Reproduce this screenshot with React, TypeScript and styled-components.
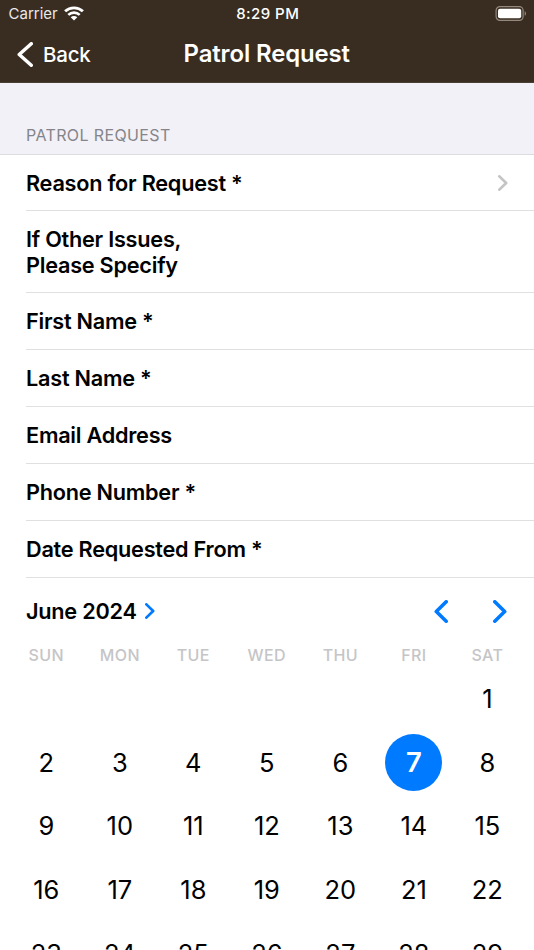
import React from 'react';
import styled, { createGlobalStyle } from 'styled-components';

const Global = createGlobalStyle`
  * { box-sizing: border-box; }
  html, body { margin: 0; overflow: hidden; background: #fff; }
  body { font-family: Inter, "Liberation Sans", sans-serif; color: #000; }
`;

const Screen = styled.div`
  width: 534px;
  height: 950px;
  overflow: hidden;
  background: #fff;
`;

const Header = styled.header`
  height: 83px;
  background: #392d21;
  border-bottom: 1px solid #4b4036;
  color: #fff;
`;

const StatusBar = styled.div`
  height: 27px;
  display: grid;
  grid-template-columns: 1fr auto 1fr;
  align-items: center;
  padding: 0 7px 0 8.5px;
  font-size: 15px;
`;

const Carrier = styled.div`
  display: flex;
  align-items: center;
  gap: 6px;
  color: #ebe9e7;
`;

const Clock = styled.time`
  font-weight: 500;
  letter-spacing: 0.45px;
`;

const BatteryIcon = styled.svg`
  justify-self: end;
`;

const NavBar = styled.div`
  height: 54px;
  display: grid;
  grid-template-columns: 1fr auto 1fr;
  align-items: center;
  padding: 0 17px 0 16.5px;
`;

const Back = styled.div`
  display: flex;
  align-items: center;
  gap: 10.5px;
  padding-top: 1px;
  font-size: 20.5px;
  font-weight: 540;
  letter-spacing: -0.2px;
`;

const Title = styled.h1`
  margin: 0;
  padding-bottom: 1px;
  font-size: 23.9px;
  font-weight: 570;
  letter-spacing: -0.1px;
`;

const SectionHeader = styled.h2`
  margin: 0;
  height: 72px;
  padding: 42px 26px 0;
  background: #f2f1f7;
  border-bottom: 1px solid #dcdce0;
  color: #858589;
  font-size: 16px;
  font-weight: 400;
  letter-spacing: 0.38px;
  line-height: 20px;
`;

const Row = styled.div<{ $height: number }>`
  height: ${p => p.$height}px;
  margin-left: 26px;
  padding-right: 26px;
  border-bottom: 1px solid #e0e0e2;
  display: flex;
  align-items: center;
  justify-content: space-between;
`;

const Label = styled.span`
  font-size: 21.7px;
  font-weight: 565;
  letter-spacing: -0.25px;
  line-height: 26px;
  white-space: pre-line;
`;

const MonthBar = styled.div`
  height: 67px;
  padding: 0 27px 0 26px;
  display: flex;
  align-items: center;
  justify-content: space-between;
`;

const Month = styled.div`
  display: flex;
  align-items: center;
  gap: 8px;
  padding-bottom: 1px;
`;

const Arrows = styled.div`
  display: flex;
  gap: 45px;
`;

const Grid = styled.div<{ $height: number }>`
  display: grid;
  grid-template-columns: repeat(7, 73.5px);
  height: ${p => p.$height}px;
  padding-left: 9.6px;
  align-items: center;
  justify-items: center;
`;

const Weekday = styled.span`
  padding-bottom: 2px;
  font-size: 16px;
  font-weight: 550;
  letter-spacing: 0.4px;
  color: #c5c5c7;
`;

const Day = styled.span<{ $selected: boolean }>`
  width: 57px;
  height: 57px;
  border-radius: 50%;
  display: grid;
  place-items: center;
  font-size: ${p => (p.$selected ? 27.5 : 25.5)}px;
  background: ${p => (p.$selected ? '#007aff' : 'transparent')};
  color: ${p => (p.$selected ? '#fff' : '#000')};
  font-weight: ${p => (p.$selected ? 600 : 400)};
`;

type ChevronProps = { dir: 'left' | 'right'; w: number; h: number; stroke: number; color: string };

function Chevron({ dir, w, h, stroke, color }: ChevronProps) {
  const inset = stroke / 2;
  const tip = dir === 'left' ? inset + 0.5 : w - inset - 0.5;
  const end = dir === 'left' ? w - inset : inset;
  return (
    <svg width={w} height={h} viewBox={`0 0 ${w} ${h}`} fill="none" stroke={color}
      strokeWidth={stroke} strokeLinecap="round" strokeLinejoin="round">
      <path d={`M${end} ${inset}L${tip} ${h / 2}L${end} ${h - inset}`} />
    </svg>
  );
}

function Wifi() {
  return (
    <svg width="20" height="15" viewBox="0 0 20 15" fill="none" stroke="#fff" strokeWidth="2.9">
      <path d="M1.1 5.3C6.1.7 13.9.7 18.9 5.3" />
      <path d="M4.3 8.9C7.5 5.9 12.5 5.9 15.7 8.9" strokeWidth="2.6" />
      <path d="M6.7 11.3C8.6 9.6 11.4 9.6 13.3 11.3L10 14.6Z" fill="#fff" stroke="none" />
    </svg>
  );
}

function Battery() {
  return (
    <BatteryIcon width="32" height="15" viewBox="0 0 32 15" fill="none">
      <rect x="1.1" y=".6" width="27" height="13.8" rx="3.8" stroke="#94897f" strokeWidth="1.2" />
      <rect x="3" y="2.7" width="23.2" height="9.6" rx="2" fill="#fff" />
      <path d="M29.7 5.2C31.4 5.8 31.4 9.2 29.7 9.8Z" fill="#94897f" />
    </BatteryIcon>
  );
}

const fields = [
  { label: 'Reason for Request *', height: 56, link: true },
  { label: 'If Other Issues,\nPlease Specify', height: 82 },
  { label: 'First Name *', height: 57 },
  { label: 'Last Name *', height: 57 },
  { label: 'Email Address', height: 57 },
  { label: 'Phone Number *', height: 57 },
  { label: 'Date Requested From *', height: 57 },
];

const weekdays = ['SUN', 'MON', 'TUE', 'WED', 'THU', 'FRI', 'SAT'];
const weekStarts = [-5, 2, 9, 16, 23];
const selectedDay = 7;

export default function App() {
  return (
    <>
      <Global />
      <Screen>
        <Header>
          <StatusBar>
            <Carrier>Carrier <Wifi /></Carrier>
            <Clock>8:29 PM</Clock>
            <Battery />
          </StatusBar>
          <NavBar>
            <Back><Chevron dir="left" w={16} h={25} stroke={3.5} color="#fff" />Back</Back>
            <Title>Patrol Request</Title>
          </NavBar>
        </Header>
        <SectionHeader>PATROL REQUEST</SectionHeader>
        {fields.map(f => (
          <Row key={f.label} $height={f.height}>
            <Label>{f.label}</Label>
            {f.link && <Chevron dir="right" w={10} h={16} stroke={2.7} color="#c4c4c6" />}
          </Row>
        ))}
        <MonthBar>
          <Month>
            <Label>June 2024</Label>
            <Chevron dir="right" w={10} h={16} stroke={2.7} color="#007aff" />
          </Month>
          <Arrows>
            <Chevron dir="left" w={14} h={23} stroke={3.6} color="#007aff" />
            <Chevron dir="right" w={14} h={23} stroke={3.6} color="#007aff" />
          </Arrows>
        </MonthBar>
        <Grid $height={22}>
          {weekdays.map(d => <Weekday key={d}>{d}</Weekday>)}
        </Grid>
        {weekStarts.map(start => (
          <Grid key={start} $height={63.6}>
            {weekdays.map((name, i) => {
              const day = start + i;
              return day > 0
                ? <Day key={name} $selected={day === selectedDay}>{day}</Day>
                : <span key={name} />;
            })}
          </Grid>
        ))}
      </Screen>
    </>
  );
}
